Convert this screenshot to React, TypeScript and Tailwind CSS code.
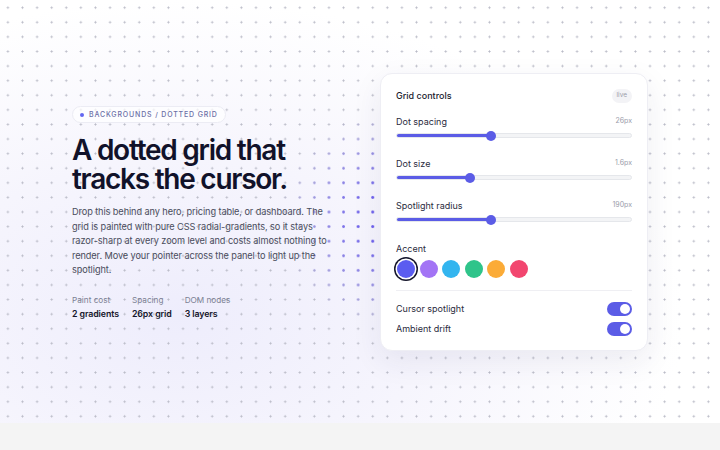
const sliders = [
  { label: "Dot spacing", value: "26px", pct: 40 },
  { label: "Dot size", value: "1.6px", pct: 31 },
  { label: "Spotlight radius", value: "190px", pct: 40 },
];

const accents = ["#5b5cf0", "#a374f5", "#33b5ef", "#2fc48a", "#fbab37", "#f2466f"];

const stats = [
  { label: "Paint cost", value: "2 gradients" },
  { label: "Spacing", value: "26px grid" },
  { label: "DOM nodes", value: "3 layers" },
];

function Slider({ pct }: { pct: number }) {
  return (
    <div className="relative mt-[5px] h-[5px] w-full rounded-full border border-gray-200 bg-gray-100">
      <div className="h-full rounded-full bg-[#5b5ce6]" style={{ width: `${pct}%` }} />
      <div
        className="absolute top-1/2 h-[10px] w-[10px] -translate-x-1/2 -translate-y-1/2 rounded-full bg-[#5b5ce6]"
        style={{ left: `${pct}%` }}
      />
    </div>
  );
}

function Toggle() {
  return (
    <div className="flex h-[14px] w-[25px] items-center justify-end rounded-full bg-[#5b5ce6] px-[2px]">
      <div className="h-[10px] w-[10px] rounded-full bg-white" />
    </div>
  );
}

export default function App() {
  return (
    <div className="min-h-[450px] bg-[#f4f4f4] font-['Inter',sans-serif]">
      <section className="relative h-[423px] w-full overflow-hidden bg-white">
        {/* soft tint */}
        <div className="absolute inset-0 bg-[radial-gradient(ellipse_70%_75%_at_25%_75%,#eeedfc_0%,#f6f5fd_50%,rgba(255,255,255,0)_100%)]" />
        {/* base dots */}
        <div className="absolute inset-0 bg-[radial-gradient(circle,#b9bac6_0.8px,transparent_1.3px)] bg-[length:14.6px_14.6px] bg-[position:0.6px_0.4px]" />
        {/* spotlight dots */}
        <div className="absolute inset-0 bg-[radial-gradient(circle,#6d5ff0_1.1px,transparent_1.7px)] bg-[length:14.6px_14.6px] bg-[position:0.6px_0.4px] [mask-image:radial-gradient(circle_110px_at_390px_220px,black_25%,transparent_100%)]" />

        <div className="relative flex items-start">
          <div className="ml-[72px] mt-[106px] w-[256px]">
            <div className="flex w-fit items-center gap-[5px] rounded-full border border-[#ececf4] bg-white/70 px-[7px] py-[3px]">
              <span className="h-[4px] w-[4px] rounded-full bg-[#6366f1]" />
              <span className="text-[7px] font-medium leading-[9px] tracking-[0.12em] text-[#6b6fa6]">
                BACKGROUNDS / DOTTED GRID
              </span>
            </div>
            <h1 className="mt-[13px] text-[28px] font-semibold leading-[29px] tracking-[-0.045em] text-[#11122a]">
              A dotted grid that tracks the cursor.
            </h1>
            <p className="mt-[11px] text-[9.2px] leading-[14.5px] tracking-[-0.01em] text-[#4a4d5c]">
              Drop this behind any hero, pricing table, or dashboard. The grid is painted with pure CSS
              radial-gradients, so it stays razor-sharp at every zoom level and costs almost nothing to
              render. Move your pointer across the panel to light up the spotlight.
            </p>
            <div className="mt-[16px] flex gap-[13px]">
              {stats.map((s) => (
                <div key={s.label}>
                  <div className="text-[8.2px] text-[#7b7f93]">{s.label}</div>
                  <div className="mt-[1px] text-[8.8px] font-semibold tracking-[-0.01em] text-[#15162b]">{s.value}</div>
                </div>
              ))}
            </div>
          </div>

          <div className="ml-[52px] mt-[73px] w-[268px] rounded-[12px] border border-[#eeeef4] bg-white px-[15px] pb-[14px] pt-[15px] shadow-[0_10px_30px_rgba(40,40,90,0.08)]">
            <div className="flex items-center justify-between">
              <span className="text-[9px] font-medium text-[#1a1b2e]">Grid controls</span>
              <span className="rounded-full bg-[#f3f3f6] px-[5px] py-[2px] text-[6.5px] text-[#9a9caa]">live</span>
            </div>
            <div className="mt-[12px] flex flex-col gap-[18.5px]">
              {sliders.map((s) => (
                <div key={s.label}>
                  <div className="flex items-center justify-between">
                    <span className="text-[9px] text-[#2a2b3d]">{s.label}</span>
                    <span className="text-[7px] text-[#9a9caa]">{s.value}</span>
                  </div>
                  <Slider pct={s.pct} />
                </div>
              ))}
            </div>
            <div className="mt-[20px] text-[9px] text-[#2a2b3d]">Accent</div>
            <div className="mt-[4px] flex items-center gap-[4.6px] pl-[1px]">
              {accents.map((c, i) => (
                <div
                  key={c}
                  className={
                    i === 0
                      ? "h-[18px] w-[18px] rounded-full ring-[1.5px] ring-[#15162b] ring-offset-[1.5px]"
                      : "h-[18px] w-[18px] rounded-full"
                  }
                  style={{ backgroundColor: c }}
                />
              ))}
            </div>
            <div className="mt-[12px] border-t border-[#efeff3]" />
            <div className="mt-[11px] flex items-center justify-between">
              <span className="text-[9px] text-[#2a2b3d]">Cursor spotlight</span>
              <Toggle />
            </div>
            <div className="mt-[6px] flex items-center justify-between">
              <span className="text-[9px] text-[#2a2b3d]">Ambient drift</span>
              <Toggle />
            </div>
          </div>
        </div>
      </section>
    </div>
  );
}
